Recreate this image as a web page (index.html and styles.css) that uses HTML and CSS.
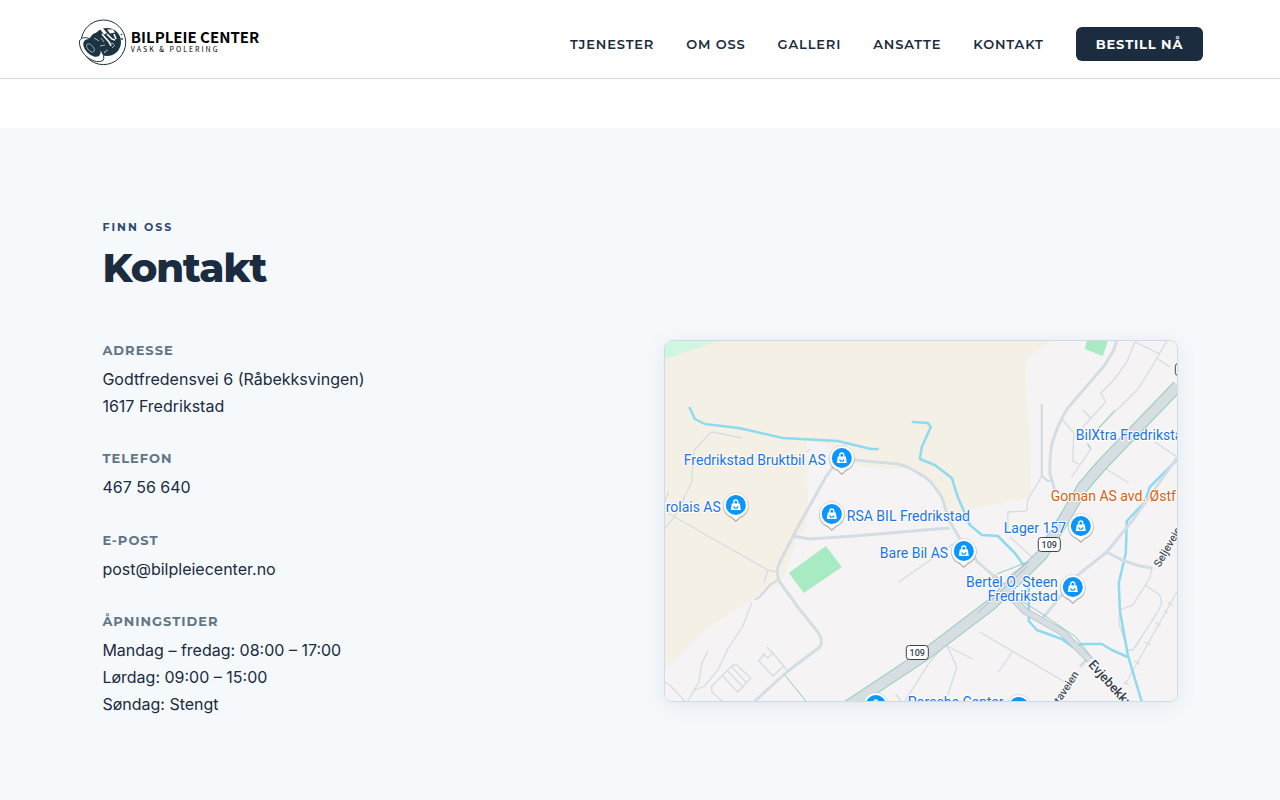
FILE: index.html
```html
<!DOCTYPE html>
<html lang="no">
<head>
<meta charset="utf-8">
<meta name="viewport" content="width=device-width, initial-scale=1">
<title>Bilpleie Center – Kontakt</title>
<link rel="stylesheet" href="styles.css">
</head>
<body>
<header class="site-header">
  <a class="brand" href="#">
    <svg class="brand-mark" viewBox="5 4 48 48" aria-hidden="true">
      <circle cx="29.4" cy="28.3" r="22.3" fill="#fff" stroke="#1c3342" stroke-width="1"/>
      <circle cx="33" cy="28" r="14" fill="#1c3342"/>
      <path d="M5.500 27c-.5 6 3 13 9 17 5 3.500 11 5 15 2 1-4-1-8-4-11l-7-8c-4-4-11-5-13 0z" fill="#fff" stroke="#1c3342" stroke-width="1"/>
      <ellipse cx="18" cy="34" rx="10.500" ry="6.500" transform="rotate(45 18 34)" fill="#1c3342"/>
      <ellipse cx="16.500" cy="34" rx="5" ry="2.800" transform="rotate(48 16.500 34)" fill="none" stroke="#a9b6bd" stroke-width=".8"/>
      <path d="M14 26l5-6 7-3-2 7 3 6 2 9-6-6z" fill="#1c3342"/>
      <path d="M25.500 14.500l2.500-1.500 5 6-3 1.500z" fill="#fff"/>
      <path d="M33 15.500h6l2 3-5 1z" fill="#fff"/>
      <path d="M28 20l7 8 2 4M33 20l5 5 3 1M40 20l2 5" fill="none" stroke="#fff" stroke-width="1.600"/>
      <path d="M20 24l5 3M26 32l5-1M32 36l2 1M27 24l3 4M38 34l3-3M36 29l4 1" fill="none" stroke="#b9c6cc" stroke-width=".9"/>
      <circle cx="31" cy="38" r=".8" fill="#fff"/>
      <circle cx="45" cy="23" r=".9" fill="#1c3342"/><circle cx="47.500" cy="20.500" r=".8" fill="#1c3342"/><circle cx="48" cy="25" r=".9" fill="#1c3342"/>
    </svg>
    <span class="brand-text"><span class="brand-name">BILPLEIE CENTER</span><span class="brand-tag">VASK &amp; POLERING</span></span>
  </a>
  <nav class="nav">
    <a href="#tjenester">TJENESTER</a>
    <a href="#om-oss">OM OSS</a>
    <a href="#galleri">GALLERI</a>
    <a href="#ansatte">ANSATTE</a>
    <a href="#kontakt">KONTAKT</a>
    <a class="cta" href="#bestill">BESTILL NÅ</a>
  </nav>
</header>
<main>
<section class="contact" id="kontakt">
  <p class="eyebrow">FINN OSS</p>
  <h2 class="title">Kontakt</h2>
  <div class="columns">
    <div class="details">
      <div class="detail"><h3>ADRESSE</h3><p>Godtfredensvei 6 (Råbekksvingen)<br>1617 Fredrikstad</p></div>
      <div class="detail"><h3>TELEFON</h3><p><a href="tel:46756640">467 56 640</a></p></div>
      <div class="detail"><h3>E-POST</h3><p><a href="mailto:post@bilpleiecenter.no">post@bilpleiecenter.no</a></p></div>
      <div class="detail"><h3>ÅPNINGSTIDER</h3><p>Mandag – fredag: 08:00 – 17:00<br>Lørdag: 09:00 – 15:00<br>Søndag: Stengt</p></div>
    </div>
    <div class="map">
      <svg viewBox="665 341 512 360" preserveAspectRatio="xMidYMid slice" role="img" aria-label="Kart">
        <defs>
          <g id="pin">
            <path d="M0 16L-4 12.200A12.700 12.700 0 1 1 4 12.200Z" fill="#444" opacity=".45" transform="translate(0 1)"/>
            <path d="M0 15.500L-4 12A12.500 12.500 0 1 1 4 12Z" fill="#fff" stroke="#b9bec4" stroke-width=".5"/>
            <circle r="10" fill="#0a95ff"/>
            <path d="M-4-1.500h8l1 6.500H-5z" fill="#fff"/>
            <path d="M-2-1v-2a2 2 0 0 1 4 0v2" fill="none" stroke="#fff" stroke-width="1.300"/>
            <path d="M-2 1.200a2 2 0 0 0 4 0" fill="none" stroke="#0a95ff" stroke-width="1.100"/>
          </g>
        </defs>
        <rect x="665" y="341" width="512" height="360" fill="#f5f3f4"/>
        <path fill="#f5f0e5" d="M665 341H1050L1028 358 1025 373 1027 407 1030 427 1031 497 968 510 950 515 943 497 932 480 915 472 902 469 862 467 842 458 822 443 807 441 808 497 807 527 797 540 785 575 778 585 755 598 708 628 688 648 665 669Z"/>
        <path fill="#d0f6df" d="M665 341h54l-54 18z"/>
        <path fill="#a8eac1" d="M826 546l16 21-38 26-15-20zM1087 341h21l-5 15-18-7z"/>
        <g class="lane">
          <path d="M742 438L713 432 710 433 694 451 692 482 675 517 665 528M669 491L665 502M668 513L698 530 708 536 768 570 777 572M768 570L764 583M807 452L810 449"/>
          <path d="M752 603L743 626 728 649 718 670 705 686 693 691M708 651L702 663 699 682 688 701M665 682L670 685 685 701"/>
          <path d="M733 665H737L751 678 738 692 723 676M733 665L712 686V692L722 701M728 671L743 687M732 667L747 683"/>
          <path d="M767 647L773 653 787 670M784 666L773 676 759 661 764 654 768 658 773 653"/>
          <path d="M899 582L955 543M896 694L901 701M1010 537L1032 557"/>
          <path d="M980 632L1065 682M1012 652L999 672M905 701L930 662 945 645 973 659M947 645L957 667 948 695"/>
          <path d="M1135 342L1127 362 1114 380 1101 393 1106 402 1083 427M1167 341L1152 367 1138 389 1097 430M1135 342L1160 354M1158 359L1170 367M1083 410L1091 418"/>
          <path d="M1063 420L1074 433 1073 461 1079 464M1087 443L1091 449 1072 477M1103 467L1129 483M1155 442L1177 457"/>
          <path d="M1042 476L1028 500 1027 511 1008 512V530"/>
          <path d="M1152 568L1150 578 1133 605 1120 610 1119 623 1128 650H1133L1158 612 1162 603 1160 595 1145 585M1157 613L1135 648"/>
        </g>
        <path d="M1177 592L1125 685M1168 602L1174 606M1164 610L1168 613M1156 623L1161 626M1145 642L1151 645M1134 661L1140 664M1124 682L1129 685" fill="none" stroke="#cfd3d8"/>
        <g class="river">
          <path d="M690 408L695 419 705 424 739 428 783 438 838 441 871 449 878 449"/>
          <path d="M913 422L928 423 931 427 922 447 920 459 935 465 952 478 958 497 970 525 982 535 998 536 1015 553 1023 564 1029 575V621L1037 630 1062 639 1073 647 1082 644H1102L1112 650 1128 657"/>
          <path d="M1177 460L1150 487 1145 502 1127 521 1126 553 1119 583 1120 610 1128 655 1142 702"/>
        </g>
        <g class="road">
          <path d="M842 459L855 460 898 464 908 467 925 477 932 483 942 497 949 520 962 542 978 562 995 577"/>
          <path d="M838 463L833 467 826 477 798 527 780 562Q775 573 780 582L798 607 818 632Q824 641 820 647L787 672 754 702"/>
          <path d="M793 536L810 539 855 536 925 530 950 528"/>
          <path d="M1117 340L1114 350 1105 365 1068 408Q1058 424 1053 441 1050 450 1050 473L1055 490"/>
          <path d="M1177 458L1133 520 1107 552 1078 575 1043 618M1107 552L1122 560 1140 566 1153 568M1088 658L1080 667"/>
        </g>
        <path d="M778 580L770 585 760 597 755 600M1042 404V476L1048 481 1052 480" fill="none" stroke="#d0d8e2" stroke-width="2"/>
        <g fill="none" stroke="#8dceb7" stroke-linejoin="round">
          <path d="M848 706L925 655 992 604 1042 555 1065 518 1083 487 1102 465 1178 386" stroke="#93cdb9" stroke-width="12"/>
          <path d="M993 577L1025 611 1062 632 1090 660" stroke="#a9b9c6" stroke-width="7"/>
          <path d="M785 675L806 701M1115 410L1097 430M1088 444L1091 449M997 574L1028 562M1020 600L1038 611 1076 637 1093 659"/>
        </g>
        <g fill="none" stroke="#d6dee4" stroke-linejoin="round">
          <path d="M848 706L925 655 992 604 1042 555 1065 518 1083 487 1102 465 1178 386" stroke-width="10"/>
          <path d="M993 577L1025 611 1062 632 1090 660" stroke-width="6"/>
        </g>
        <path d="M978 613L1028 566M1011 575L1029 562" stroke="#acb9bd" fill="none"/>
        <g class="shield">
          <rect x="1038.500" y="537.500" width="22" height="14" rx="3"/><text x="1049.500" y="548">109</text>
          <rect x="906.500" y="645.500" width="22" height="14" rx="3"/><text x="917.500" y="656">109</text>
          <rect x="1175.500" y="363.500" width="22" height="12" rx="3"/>
        </g>
        <g class="street">
          <text transform="translate(1160 568) rotate(-60)">Seljeveien</text>
          <text transform="translate(1058 707) rotate(-57)">ttaveien</text>
          <text class="street-major" transform="translate(1088 665) rotate(48)">Evjebekkv</text>
        </g>
        <use href="#pin" x="842" y="458"/><use href="#pin" x="736" y="505"/><use href="#pin" x="832" y="514"/><use href="#pin" x="964" y="551"/>
        <use href="#pin" x="1081" y="526"/><use href="#pin" x="1073" y="587"/><use href="#pin" x="876" y="705"/><use href="#pin" x="1019" y="707"/>
        <g class="place">
          <text x="684" y="465">Fredrikstad Bruktbil AS</text>
          <text x="721" y="512" text-anchor="end">rolais AS</text>
          <text x="847" y="521">RSA BIL Fredrikstad</text>
          <text x="880" y="558">Bare Bil AS</text>
          <text x="1004" y="533">Lager 157</text>
          <text x="1058" y="587" text-anchor="end">Bertel O. Steen</text>
          <text x="1058" y="601" text-anchor="end">Fredrikstad</text>
          <text x="908" y="707">Porsche Center</text>
          <text x="1076" y="440">BilXtra Fredriksta</text>
          <text class="food" x="1051" y="501">Goman AS avd. Østf</text>
        </g>
      </svg>
    </div>
  </div>
</section>
</main>
</body>
</html>
```
FILE: styles.css
```css
* { box-sizing: border-box; margin: 0; padding: 0; }
body { background: #fff; color: #1b2b40; font-family: Inter, "Liberation Sans", sans-serif; font-size: 16px; }
a { color: inherit; text-decoration: none; }

.site-header { position: sticky; top: 0; z-index: 1; display: flex; align-items: center; justify-content: space-between; padding: 18px 6% 8px; background: #fff; border-bottom: 1px solid #cddae8; }
.brand { display: flex; align-items: center; gap: 4px; color: #000; font-family: "Noto Sans CJK SC", "Noto Sans", sans-serif; }
.brand-mark { width: 48px; height: 48px; margin-bottom: 4px; margin-left: 2px; }
.brand-text { display: flex; flex-direction: column; margin-bottom: 4px; }
.brand-name { font-size: 15px; font-weight: 700; line-height: 14px; }
.brand-tag { font-size: 7px; line-height: 10px; letter-spacing: 2px; }
.nav { display: flex; align-items: center; gap: 32px; font: 600 13px/18px Montserrat, Inter, sans-serif; letter-spacing: 0.065em; }
.cta { padding: 8px 20px; border-radius: 6px; background: #1b2b40; color: #fff; font-weight: 700; }

.contact { margin-top: 49px; padding: 90px 8% 96px; background: #f5f9fc; }
.eyebrow { color: #2f4a6d; font: 700 11px/18px Montserrat, Inter, sans-serif; letter-spacing: 2px; }
.title { margin: 8px 0 48px; font: 800 40px/48px Montserrat, Inter, sans-serif; letter-spacing: -1px; }
.columns { display: grid; grid-template-columns: 1fr 1fr; gap: 48px; }
.details { display: flex; flex-direction: column; gap: 28px; }
.detail h3 { margin-bottom: 6px; color: #627586; font: 700 13px/20px Montserrat, Inter, sans-serif; letter-spacing: 1px; }
.detail p { line-height: 1.7; }

.map { align-self: start; overflow: hidden; border: 1px solid #cddae8; border-radius: 8px; box-shadow: 0 4px 20px rgba(27, 43, 64, 0.08); }
.map svg { display: block; width: 100%; height: 360px; }
.lane { fill: none; stroke: #d5dce4; stroke-width: 1.3; }
.road { fill: none; stroke: #d5dde4; stroke-width: 3; stroke-linejoin: round; }
.river { fill: none; stroke: #8edaee; stroke-width: 2.5; stroke-linejoin: round; stroke-linecap: round; }
.shield rect { fill: #fff; stroke: #37424f; }
.shield text { fill: #37424f; font: 500 9px Roboto, sans-serif; text-anchor: middle; }
.place text, .street text { paint-order: stroke; stroke: #fff; stroke-width: 2px; stroke-linejoin: round; }
.place { fill: #1a73e8; font: 14px Roboto, sans-serif; }
.place .food { fill: #d5600f; }
.street { fill: #4a5562; font: 500 11px Roboto, sans-serif; }
.street .street-major { fill: #37424f; font-size: 13px; }
```
